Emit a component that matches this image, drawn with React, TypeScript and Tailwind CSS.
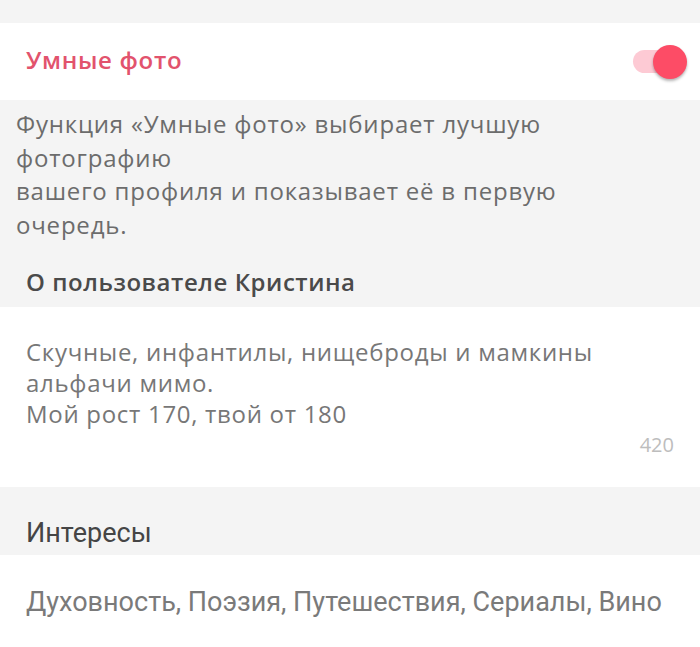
import React from "react";

function SmartToggle() {
  return (
    <div className="relative w-[54px] h-[34px] mt-[4px] flex items-center">
      <div className="h-[23px] w-[44px] rounded-full bg-[#fdcad4]" />
      <div className="absolute right-0 top-0 w-[34px] h-[34px] rounded-full bg-[#fd4c66] shadow-[0_2px_3px_rgba(0,0,0,0.3)]" />
    </div>
  );
}

export default function App() {
  return (
    <div className="w-[700px] h-[647px] overflow-hidden bg-[#f4f4f4] font-['Open_Sans',sans-serif]">
      <div className="h-[23px]" />

      <div className="h-[77px] bg-white flex items-center justify-between pl-[26px] pr-[13px] pb-[4px]">
        <span className="text-[24px] leading-[32px] font-semibold text-[#e2536d] tracking-[0.7px]">
          Умные фото
        </span>
        <SmartToggle />
      </div>

      <div className="pt-[7px] px-[16px] text-[24px] leading-[33.5px] text-[#6c6c6c] tracking-[0.8px]">
        <p>Функция «Умные фото» выбирает лучшую</p>
        <p>фотографию</p>
        <p>вашего профиля и показывает её в первую</p>
        <p>очередь.</p>
      </div>

      <div className="h-[66px] px-[26px] pt-[25px]">
        <h3 className="text-[24px] leading-[32px] font-semibold text-[#4a4a4a] tracking-[0.55px]">
          О пользователе Кристина
        </h3>
      </div>

      <div className="h-[180px] bg-white px-[26px] pt-[29px]">
        <div className="text-[24px] leading-[31px] text-[#777777] tracking-[0.7px]">
          <p>Скучные, инфантилы, нищеброды и мамкины</p>
          <p>альфачи мимо.</p>
          <p>Мой рост 170, твой от 180</p>
        </div>
        <div className="flex justify-end pt-[6px]">
          <span className="text-[20px] leading-[20px] text-[#bdbdbd]">420</span>
        </div>
      </div>

      <div className="h-[68px] px-[26px] pt-[30px]">
        <span className="block font-['Roboto',sans-serif] text-[27px] leading-[32px] text-[#454545]">
          Интересы
        </span>
      </div>

      <div className="h-[92px] bg-white px-[26px] pt-[31px]">
        <span className="block font-['Roboto',sans-serif] text-[27px] leading-[32px] text-[#7a7a7a]">
          Духовность, Поэзия, Путешествия, Сериалы, Вино
        </span>
      </div>
    </div>
  );
}
